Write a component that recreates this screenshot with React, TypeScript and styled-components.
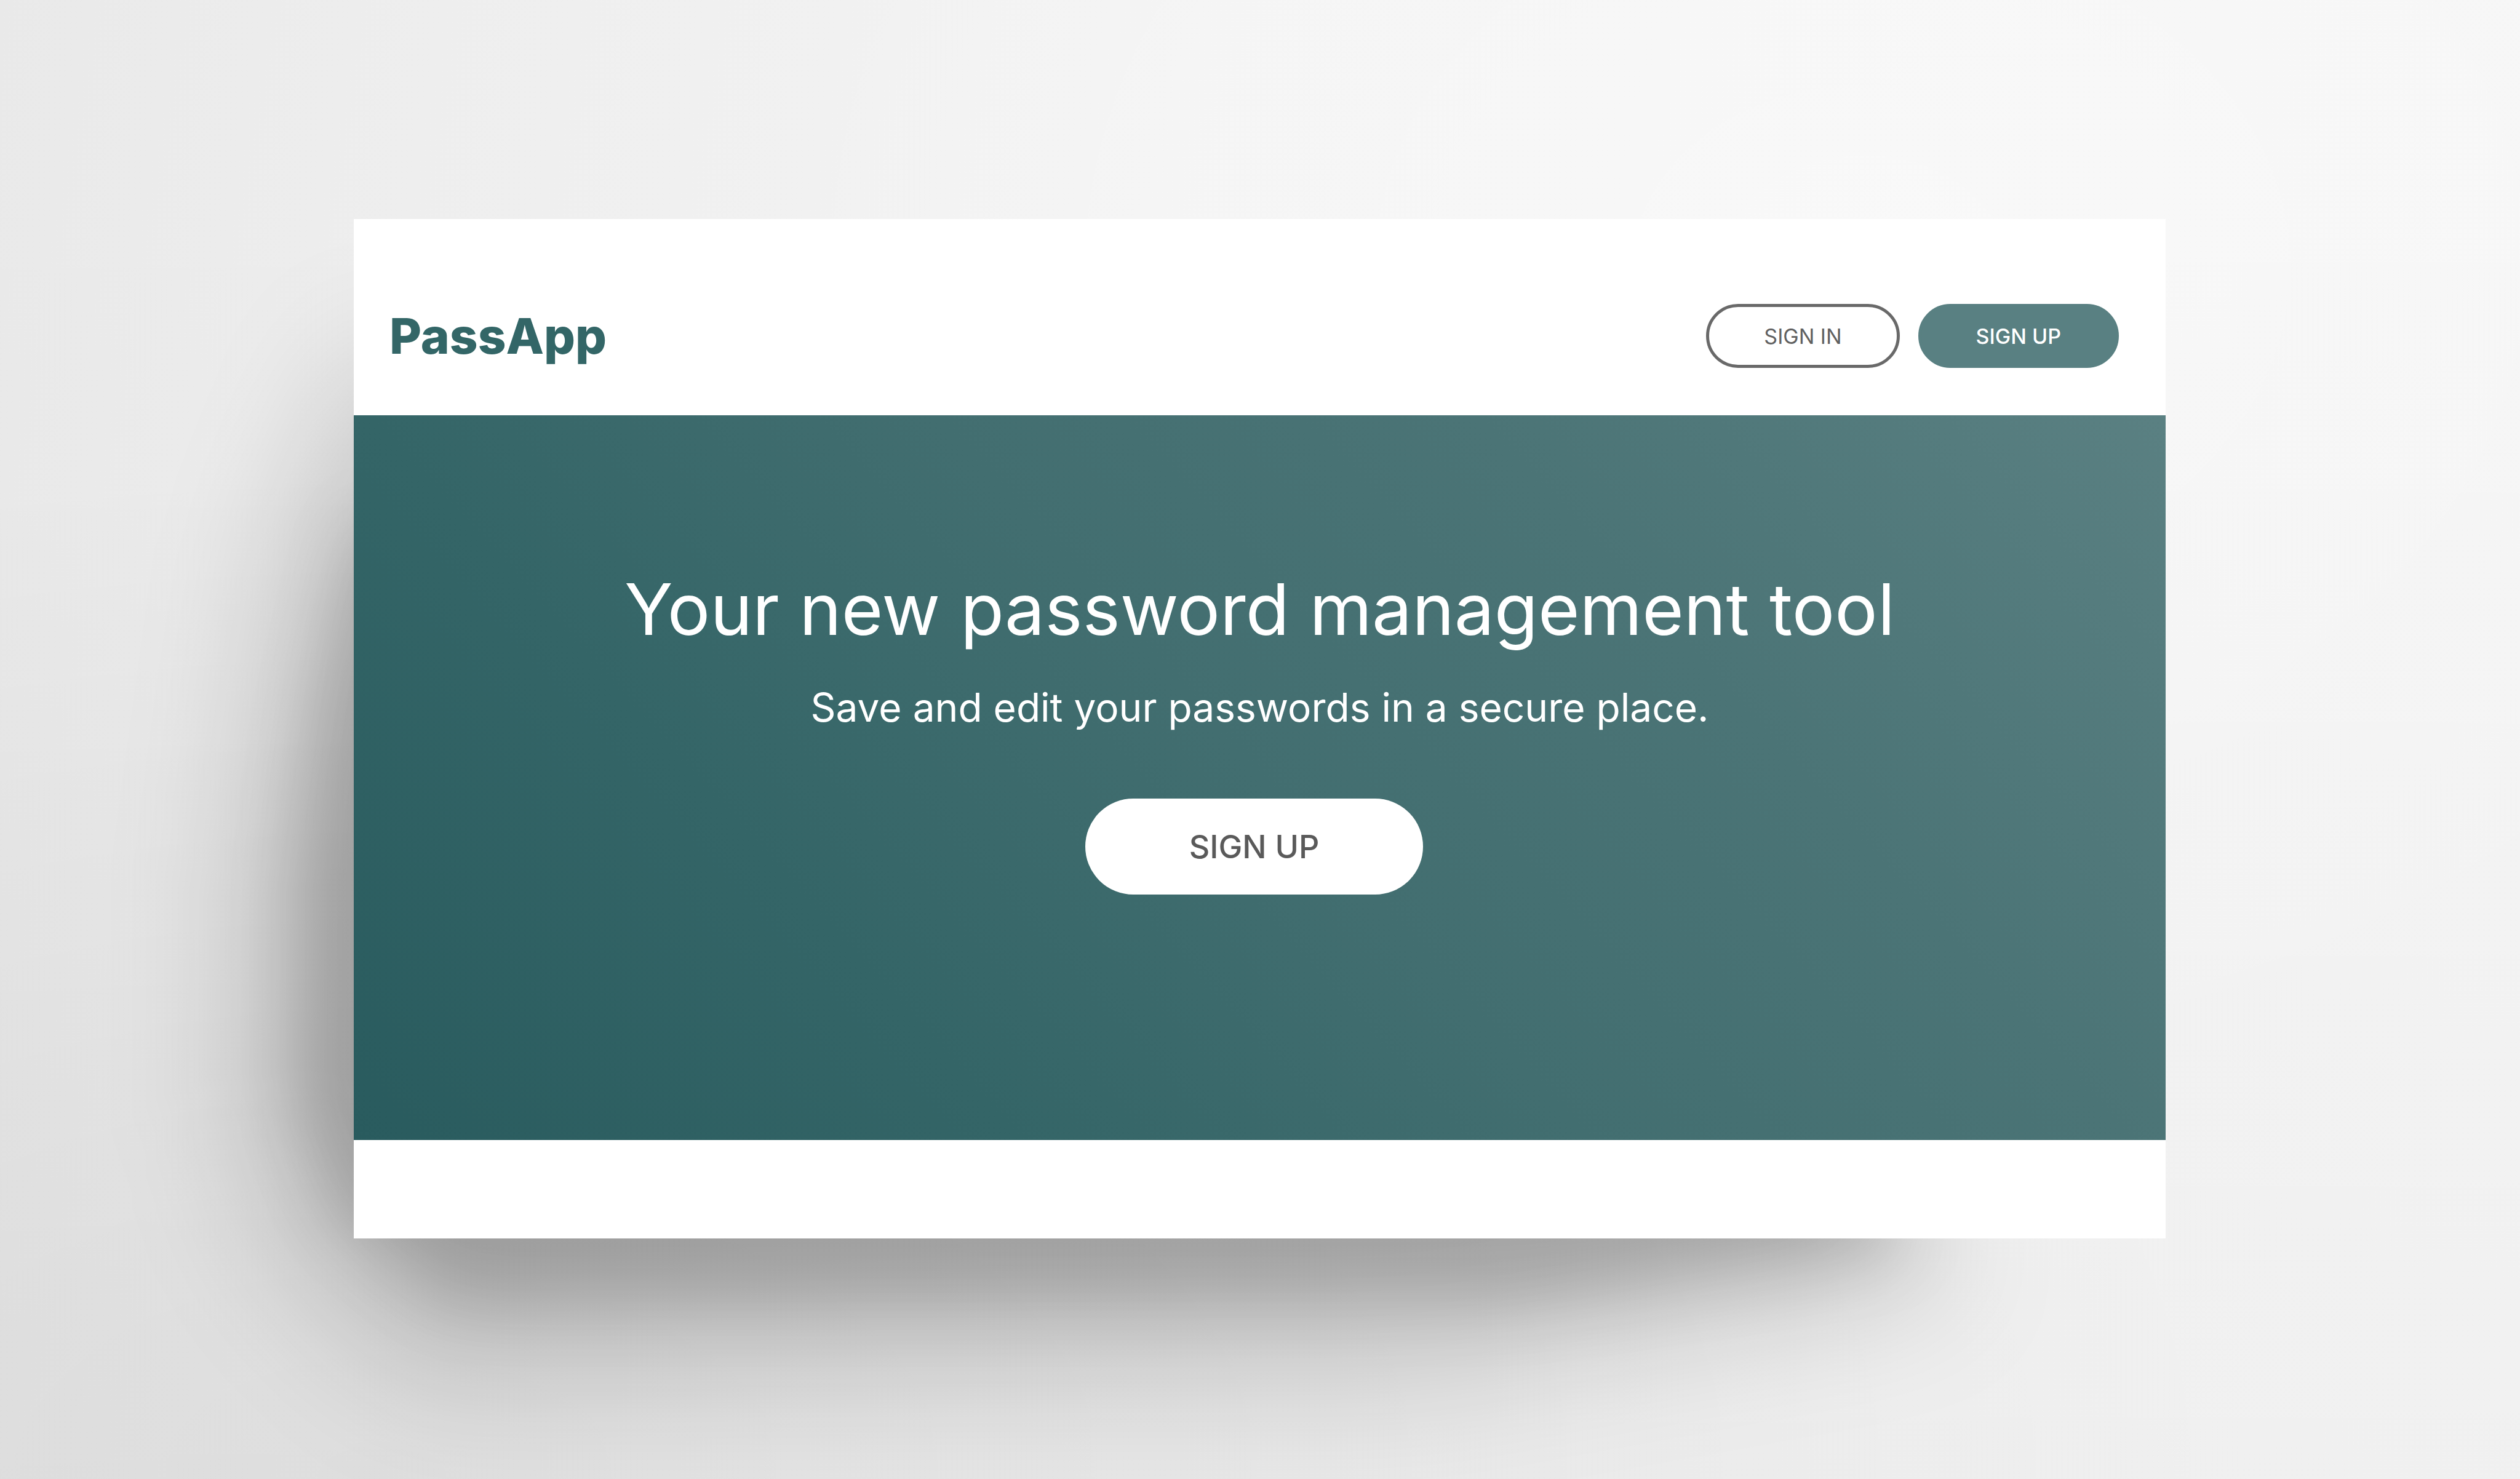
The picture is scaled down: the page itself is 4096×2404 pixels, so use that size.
import React from "react";
import styled, { createGlobalStyle } from "styled-components";

const GlobalStyle = createGlobalStyle`
  *, *::before, *::after { box-sizing: border-box; }
  body {
    margin: 0;
    font-family: Inter, "Liberation Sans", sans-serif;
    background: #f4f4f4;
  }
`;

const Stage = styled.div`
  min-height: 100vh;
  padding: 356px 576px 391px 575px;
  overflow: hidden;
  background:
    radial-gradient(ellipse 75% 70% at 15% 100%, rgba(0, 0, 0, 0.05), rgba(0, 0, 0, 0)),
    linear-gradient(to top, rgba(0, 0, 0, 0.025), rgba(0, 0, 0, 0) 90%),
    radial-gradient(ellipse 45% 60% at 74% 18%, rgba(255, 255, 255, 0.4), rgba(255, 255, 255, 0)),
    linear-gradient(100deg, #e9e9e9 0%, #eeeeee 16%, #f3f3f3 40%, #f6f6f6 100%);
`;

const Frame = styled.div`
  position: relative;
`;

/* The filter sits on the layer and the clip on its child, so the cut edges are blurred too. */
const Shadow = styled.div<{ $blur: number; $alpha: number; $shape: string }>`
  position: absolute;
  inset: -300px;
  filter: blur(${(p) => p.$blur}px);

  &::before {
    content: "";
    position: absolute;
    inset: 0;
    background: rgba(0, 0, 0, ${(p) => p.$alpha});
    clip-path: polygon(${(p) => p.$shape});
  }
`;

const Window = styled.div`
  position: relative;
  background: #ffffff;
`;

const Header = styled.header`
  display: flex;
  align-items: center;
  justify-content: space-between;
  padding: 138px 58px 77px;
`;

const Logo = styled.a`
  color: #336667;
  font-size: 80px;
  font-weight: 800;
  line-height: 104px;
  text-decoration: none;
`;

const Nav = styled.nav`
  display: flex;
  gap: 12px;
`;

type Variant = "outline" | "solid" | "light";

const variants: Record<Variant, string> = {
  outline: "background: #ffffff; color: #606060; border-color: #696969; font-weight: 400;",
  solid: "background: #598082; color: #ffffff; border-color: #598082; font-weight: 500;",
  light: "background: #ffffff; color: #5a5a5a; border-color: #ffffff; font-weight: 500;",
};

const Button = styled.button<{ $variant: Variant; $large?: boolean }>`
  margin: 0 18px 0 0;
  padding: ${(p) => (p.$large ? "0 164px" : "0 89px")};
  height: ${(p) => (p.$large ? "156px" : "104px")};
  border: 5px solid;
  border-radius: 78px;
  font-family: inherit;
  font-size: ${(p) => (p.$large ? "52px" : "34px")};
  white-space: nowrap;
  cursor: pointer;
  ${(p) => variants[p.$variant]}
`;

const Hero = styled.main`
  display: flex;
  flex-direction: column;
  align-items: center;
  padding: 243px 58px 399px;
  color: #ffffff;
  text-align: center;
  background: linear-gradient(48deg, #295b5e 0%, #346567 27%, #426e70 50%, #4b7476 72%, #5a8082 100%);
`;

const Title = styled.h1`
  margin: 0 0 48px;
  font-size: 116px;
  font-weight: 400;
  line-height: 144px;
`;

const Tagline = styled.p`
  margin: 0 0 108px;
  font-size: 64px;
  font-weight: 400;
  line-height: 80px;
`;

const Footer = styled.footer`
  height: 160px;
`;

export default function App() {
  return (
    <>
      <GlobalStyle />
      <Stage>
        <Frame>
          <Shadow
            $blur={100}
            $alpha={0.15}
            $shape="9% 22%, 5% 37%, 3% 60%, 3% 79%, 5% 88%, 11% 97%, 57% 97%, 82% 90%, 74% 68%"
          />
          <Shadow
            $blur={54}
            $alpha={0.18}
            $shape="9% 35%, 7% 48%, 6% 60%, 6% 77%, 8% 85%, 13% 91%, 62% 91%, 80% 87%, 63% 64%"
          />
          <Window>
            <Header>
              <Logo href="#">PassApp</Logo>
              <Nav>
                <Button type="button" $variant="outline">SIGN IN</Button>
                <Button type="button" $variant="solid">SIGN UP</Button>
              </Nav>
            </Header>
            <Hero>
              <Title>Your new password management tool</Title>
              <Tagline>Save and edit your passwords in a secure place.</Tagline>
              <Button type="button" $variant="light" $large>SIGN UP</Button>
            </Hero>
            <Footer />
          </Window>
        </Frame>
      </Stage>
    </>
  );
}
